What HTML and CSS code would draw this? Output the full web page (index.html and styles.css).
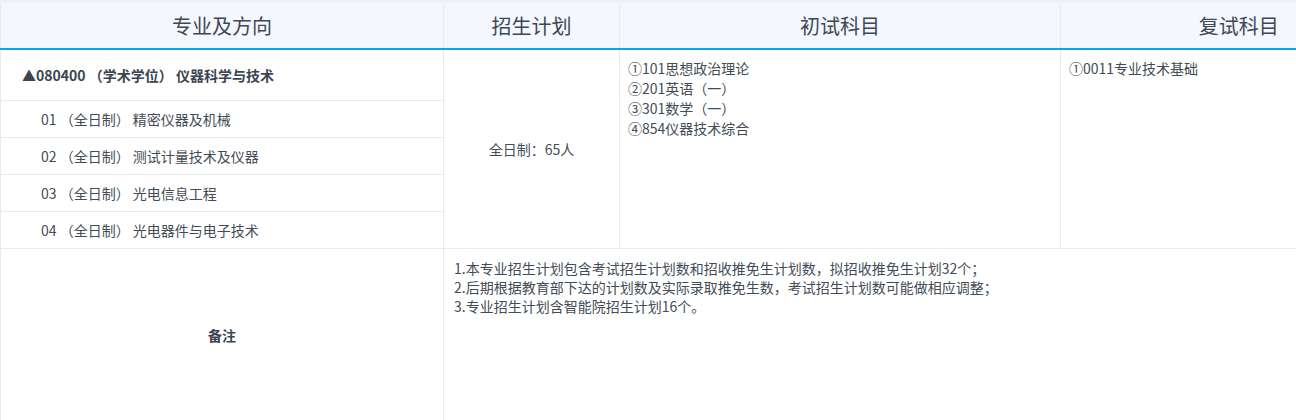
FILE: index.html
```html
<!DOCTYPE html>
<html lang="zh-CN">
<head>
<meta charset="utf-8">
<title>招生计划</title>
<link rel="stylesheet" href="styles.css">
</head>
<body>
<div class="wrap">
  <table class="plan">
    <colgroup>
      <col class="c1"><col class="c2"><col class="c3"><col class="c4">
    </colgroup>
    <thead>
      <tr>
        <th>专业及方向</th>
        <th>招生计划</th>
        <th>初试科目</th>
        <th>复试科目</th>
      </tr>
    </thead>
    <tbody>
      <tr class="major">
        <td class="major-name">▲080400 （学术学位） 仪器科学与技术</td>
        <td class="quota" rowspan="5">全日制：65人</td>
        <td class="subjects" rowspan="5">①101思想政治理论<br>②201英语（一）<br>③301数学（一）<br>④854仪器技术综合</td>
        <td class="subjects" rowspan="5">①0011专业技术基础</td>
      </tr>
      <tr class="dir"><td>01 （全日制） 精密仪器及机械</td></tr>
      <tr class="dir"><td>02 （全日制） 测试计量技术及仪器</td></tr>
      <tr class="dir"><td>03 （全日制） 光电信息工程</td></tr>
      <tr class="dir"><td>04 （全日制） 光电器件与电子技术</td></tr>
      <tr class="remark">
        <td class="remark-label">备注</td>
        <td class="remark-text" colspan="3">1.本专业招生计划包含考试招生计划数和招收推免生计划数，拟招收推免生计划32个；<br>2.后期根据教育部下达的计划数及实际录取推免生数，考试招生计划数可能做相应调整；<br>3.专业招生计划含智能院招生计划16个。</td>
      </tr>
    </tbody>
  </table>
</div>
</body>
</html>
```
FILE: styles.css
```css
html, body {
  margin: 0;
  padding: 0;
  background: #ffffff;
  overflow: hidden;
}

.wrap {
  border-top: 3px solid #eff1f4;
  width: 1296px;
  overflow: hidden;
}

.plan {
  border-collapse: collapse;
  table-layout: fixed;
  width: 1416px;
  font-family: "Noto Sans CJK SC", "Liberation Sans", sans-serif;
  font-size: 14px;
  color: #434c56;
}

.c1 { width: 443px; }
.c2 { width: 176px; }
.c3 { width: 441px; }
.c4 { width: 356px; }

.plan th {
  background: #f4f7fd;
  height: 45px;
  padding: 0;
  font-size: 20px;
  font-weight: normal;
  color: #3e4856;
  text-align: center;
  border-left: 1px solid #e6ebf0;
  border-bottom: 2px solid #0aa6e8;
}

.plan td {
  padding: 0;
  border: 1px solid #e6ebf0;
  vertical-align: middle;
}

.major td.major-name {
  height: 50px;
  padding-left: 21px;
  font-weight: bold;
  font-size: 14px;
  color: #3b4450;
}

.dir td {
  height: 36px;
  padding-left: 40px;
}

.quota {
  text-align: center;
}

.subjects {
  vertical-align: top !important;
  padding: 8px 8px 0 8px !important;
  line-height: 20px;
}

.remark td {
  height: 162px;
}

.remark-label {
  text-align: center;
  font-weight: bold;
  font-size: 14px;
  color: #3b4450;
}

.remark-text {
  vertical-align: top !important;
  padding: 10px 10px 0 10px !important;
  line-height: 19px;
}
```
